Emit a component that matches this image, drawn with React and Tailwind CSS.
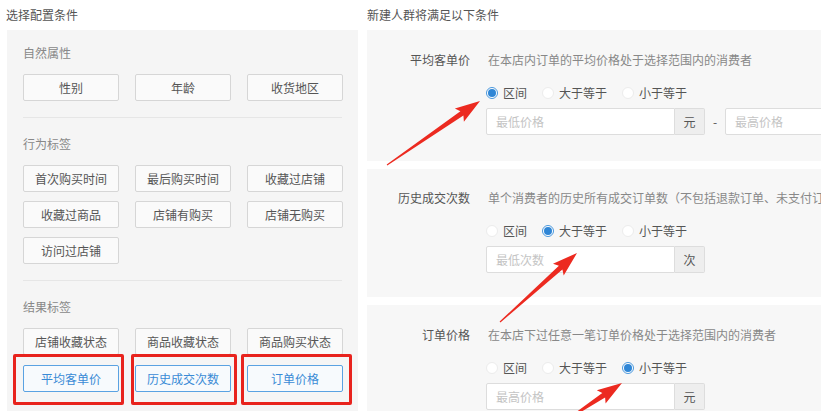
import React from "react";

const FONT = { fontFamily: '"Noto Sans CJK SC", "Noto Sans", sans-serif' };

const SECTIONS = [
  { title: "自然属性", items: ["性别", "年龄", "收货地区"] },
  {
    title: "行为标签",
    items: ["首次购买时间", "最后购买时间", "收藏过店铺", "收藏过商品", "店铺有购买", "店铺无购买", "访问过店铺"],
  },
  {
    title: "结果标签",
    items: ["店铺收藏状态", "商品收藏状态", "商品购买状态"],
    active: ["平均客单价", "历史成交次数", "订单价格"],
  },
];

const CARDS = [
  {
    label: "平均客单价",
    desc: "在本店内订单的平均价格处于选择范围内的消费者",
    pick: 0,
    range: true,
    ph: "最低价格",
    unit: "元",
  },
  {
    label: "历史成交次数",
    desc: "单个消费者的历史所有成交订单数（不包括退款订单、未支付订单）",
    pick: 1,
    ph: "最低次数",
    unit: "次",
  },
  {
    label: "订单价格",
    desc: "在本店下过任意一笔订单价格处于选择范围内的消费者",
    pick: 2,
    ph: "最高价格",
    unit: "元",
  },
];

function Radio({ on, text }) {
  return (
    <div className="flex items-center">
      {on ? (
        <span className="flex h-[12px] w-[12px] items-center justify-center rounded-full border border-[#4a98dd] bg-white">
          <span className="h-[8px] w-[8px] rounded-full bg-[#2f86d6]" />
        </span>
      ) : (
        <span className="h-[12px] w-[12px] rounded-full border border-[#ececec] bg-white" />
      )}
      <span className="ml-[5px] text-[12px] leading-[18px] text-[#555]">{text}</span>
    </div>
  );
}

function Field({ ph, unit }) {
  return (
    <div className="flex h-[27px] shrink-0">
      <div className="flex w-[189px] items-center rounded-l-[2px] border border-[#ddd] bg-white pl-[9px] text-[12px] text-[#c4c4c4]">
        {ph}
      </div>
      <div className="flex w-[30px] items-center justify-center rounded-r-[2px] border border-l-0 border-[#ddd] bg-[#eee] text-[12px] text-[#555]">
        {unit}
      </div>
    </div>
  );
}

// red annotation arrow: thin tail widening to a barbed head at `to`
function Arrow({ from, to }) {
  const [tx, ty] = from;
  const [px, py] = to;
  const dx = px - tx;
  const dy = py - ty;
  const len = Math.hypot(dx, dy);
  const ux = dx / len;
  const uy = dy / len;
  const nx = -uy;
  const ny = ux;
  const bx = px - 22 * ux;
  const by = py - 22 * uy;
  const p = (x, y, k) => `${(x + k * nx).toFixed(1)},${(y + k * ny).toFixed(1)}`;
  const pts = [p(tx, ty, -0.6), p(bx, by, -2.6), p(bx - 3 * ux, by - 3 * uy, -8), `${px},${py}`, p(bx - 3 * ux, by - 3 * uy, 8), p(bx, by, 2.6), p(tx, ty, 0.6)];
  return <polygon points={pts.join(" ")} fill="#ec2a20" />;
}

export default function App() {
  return (
    <div className="relative flex h-[411px] w-[821px] overflow-hidden bg-white" style={FONT}>
      {/* left: tag picker */}
      <div className="ml-[6px] w-[352px] shrink-0">
        <div className="flex h-[30px] items-center text-[12px] text-[#555]">选择配置条件</div>
        <div className="ml-px h-[400px] bg-[#f5f5f5] px-[16px] pt-[14px]">
          {SECTIONS.map((s, si) => (
            <div key={s.title} className={si < 2 ? "border-b border-[#e6e6e6] pb-[16px]" : ""}>
              <div className={`text-[12px] leading-[18px] text-[#888] ${si > 0 ? "mt-[17px]" : ""}`}>{s.title}</div>
              <div className="mt-[12px] grid w-[320px] grid-cols-3 gap-x-[16px] gap-y-[9px]">
                {s.items.map((t) => (
                  <div
                    key={t}
                    className="flex h-[27px] items-center justify-center rounded-[2px] border border-[#d6d6d6] bg-[#fafafa] text-[12px] text-[#555]"
                  >
                    {t}
                  </div>
                ))}
                {s.active?.map((t) => (
                  <div
                    key={t}
                    className="mt-px flex h-[27px] items-center justify-center rounded-[2px] border border-[#5aa2e2] bg-[#f7fafd] text-[12px] text-[#3a8bd6]"
                  >
                    {t}
                  </div>
                ))}
              </div>
            </div>
          ))}
        </div>
      </div>

      {/* right: conditions */}
      <div className="ml-[9px] min-w-0 flex-1">
        <div className="flex h-[30px] items-center text-[12px] text-[#555]">新建人群将满足以下条件</div>
        <div className="flex flex-col gap-[8px]">
          {CARDS.map((c, ci) => (
            <div key={c.label} className={`bg-[#f7f7f7] ${ci === 1 ? "pt-[20px] pb-[24px]" : "pt-[21px] pb-[26px]"}`}>
              <div className="flex whitespace-nowrap text-[12px] leading-[18px]">
                <div className="w-[103px] shrink-0 text-right text-[#555]">{c.label}</div>
                <div className="ml-[18px] text-[#888]">{c.desc}</div>
              </div>
              <div className="ml-[119px]">
                <div className="mt-[15px] flex gap-[15px]">
                  {["区间", "大于等于", "小于等于"].map((r, ri) => (
                    <Radio key={r} on={ri === c.pick} text={r} />
                  ))}
                </div>
                <div className="mt-[6px] flex items-center">
                  <Field ph={c.ph} unit={c.unit} />
                  {c.range && (
                    <>
                      <span className="w-[20px] shrink-0 text-center text-[12px] text-[#555]">-</span>
                      <div className="flex h-[27px] w-[200px] shrink-0 items-center rounded-[2px] border border-[#ddd] bg-white pl-[9px] text-[12px] text-[#c4c4c4]">
                        最高价格
                      </div>
                    </>
                  )}
                </div>
              </div>
            </div>
          ))}
        </div>
      </div>

      {/* annotations */}
      <div className="pointer-events-none absolute left-[13px] top-[354px] h-[51px] w-[111px] rounded-[2px] border-[3px] border-[#e8231d]" />
      <div className="pointer-events-none absolute left-[131px] top-[354px] h-[51px] w-[106px] rounded-[2px] border-[3px] border-[#e8231d]" />
      <div className="pointer-events-none absolute left-[241px] top-[354px] h-[51px] w-[111px] rounded-[2px] border-[3px] border-[#e8231d]" />
      <svg className="pointer-events-none absolute inset-0" width="821" height="411" viewBox="0 0 821 411">
        <Arrow from={[387, 165]} to={[480, 101]} />
        <Arrow from={[500, 322]} to={[577, 253]} />
        <Arrow from={[565, 421]} to={[622, 383]} />
      </svg>
    </div>
  );
}
